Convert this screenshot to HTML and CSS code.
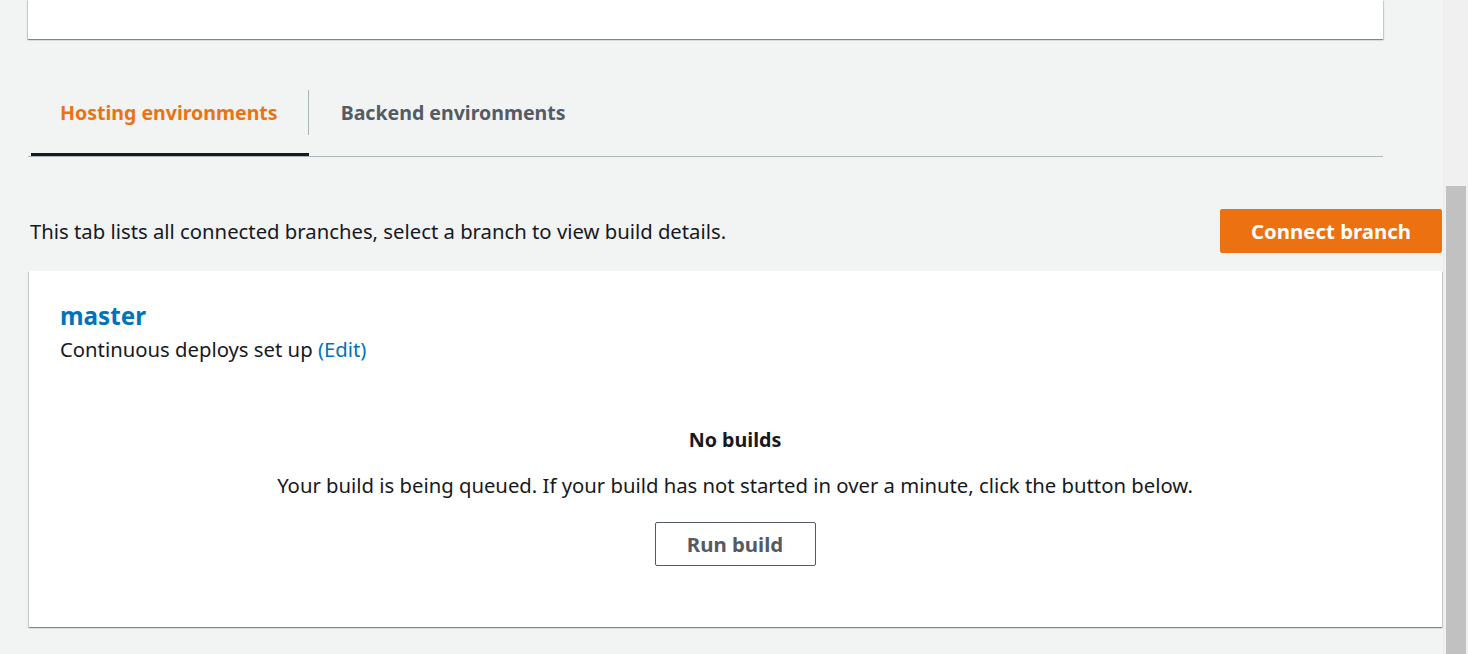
FILE: index.html
```html
<!DOCTYPE html>
<html lang="en">
<head>
<meta charset="utf-8">
<title>Amplify app</title>
<link rel="stylesheet" href="styles.css">
</head>
<body>
<div class="page">
  <main class="main">
    <div class="top-card"></div>

    <nav class="tabs">
      <div class="tab tab-active"><span class="tab-label tab-divider">Hosting environments</span></div>
      <div class="tab"><span class="tab-label">Backend environments</span></div>
    </nav>

    <section class="content">
      <div class="toolbar">
        <p class="toolbar-text">This tab lists all connected branches, select a branch to view build details.</p>
        <button class="btn btn-primary">Connect branch</button>
      </div>

      <div class="card">
        <h2 class="branch-name">master</h2>
        <p class="branch-sub">Continuous deploys set up <a class="link" href="#">(Edit)</a></p>

        <div class="empty">
          <div class="empty-title">No builds</div>
          <p class="empty-text">Your build is being queued. If your build has not started in over a minute, click the button below.</p>
          <button class="btn btn-normal">Run build</button>
        </div>
      </div>
    </section>
  </main>

  <div class="scrollbar"><div class="scroll-thumb"></div></div>
</div>
</body>
</html>
```
FILE: styles.css
```css
* { box-sizing: border-box; }

html, body {
  margin: 0;
  padding: 0;
  height: 100%;
}

body {
  background: #f2f3f3;
  color: #16191f;
  font-family: "Noto Sans", "Open Sans", sans-serif;
  font-size: 20.3px;
  overflow: hidden;
}

.page {
  display: flex;
  height: 654px;
}

.main {
  flex: 1;
  min-width: 0;
}

.top-card {
  height: 39px;
  margin: 0 60px 0 28px;
  background: #fff;
  box-shadow: 0 1px 1px 0 rgba(0, 28, 36, 0.3), 1px 1px 1px 0 rgba(0, 28, 36, 0.15), -1px 1px 1px 0 rgba(0, 28, 36, 0.15);
}

/* Tabs */
.tabs {
  display: flex;
  margin: 51px 60px 0 28px;
  padding-left: 3px;
  border-bottom: 1px solid #aab7b8;
}

.tab {
  padding-bottom: 18px;
  border-bottom: 3px solid transparent;
}

.tab-active {
  border-bottom-color: #16191f;
}

.tab-label {
  display: flex;
  align-items: center;
  height: 45px;
  padding: 0 30px 0 32px;
  font-weight: 700;
  font-size: 19.55px;
  color: #545b64;
  white-space: nowrap;
}

.tab-active .tab-label {
  color: #ec7211;
  padding: 0 30px 0 29px;
}

.tab-divider {
  border-right: 1px solid #aab7b8;
}

/* Content */
.content {
  padding: 0 1px 0 29px;
}

.toolbar {
  display: flex;
  align-items: center;
  justify-content: space-between;
  margin-top: 52px;
  height: 44px;
}

.toolbar-text {
  margin: 0;
  padding-left: 1px;
  line-height: 24px;
}

.btn {
  height: 44px;
  padding: 0;
  border-radius: 2px;
  font-family: "Noto Sans", "Open Sans", sans-serif;
  font-weight: 700;
  font-size: 20.4px;
  line-height: 24px;
  white-space: nowrap;
  text-align: center;
  cursor: pointer;
}

.btn-primary {
  background: #ec7211;
  border: 1px solid #ec7211;
  color: #fff;
  width: 222px;
}

.btn-normal {
  background: #fff;
  border: 1px solid #545b64;
  color: #545b64;
  width: 161px;
}

.card {
  margin-top: 18px;
  height: 356px;
  background: #fff;
  padding: 30px 30px 0 31px;
  box-shadow: 0 1px 1px 0 rgba(0, 28, 36, 0.3), 1px 1px 1px 0 rgba(0, 28, 36, 0.15), -1px 1px 1px 0 rgba(0, 28, 36, 0.15);
}

.branch-name {
  margin: 0;
  font-size: 24.2px;
  line-height: 30px;
  font-weight: 700;
  color: #0073bb;
}

.branch-sub {
  margin: 6px 0 0;
  line-height: 24px;
}

.link {
  color: #0073bb;
  text-decoration: none;
}

.empty {
  display: flex;
  flex-direction: column;
  align-items: center;
  margin-top: 67px;
  margin-left: -2px;
}

.empty-title {
  font-weight: 700;
  font-size: 19.7px;
  line-height: 24px;
}

.empty-text {
  margin: 21px 0 0;
  line-height: 24px;
}

.empty .btn {
  margin-top: 25px;
}

/* Fake browser scrollbar */
.scrollbar {
  flex: 0 0 25px;
  background: #f0f0f0;
  padding: 186px 2px 0 2px;
  border-left: 1px solid #ebebeb;
}

.scroll-thumb {
  height: 100%;
  background: #c1c1c1;
}
```
